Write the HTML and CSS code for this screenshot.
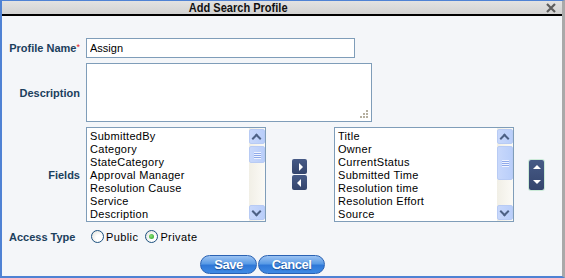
FILE: index.html
```html
<!DOCTYPE html>
<html>
<head>
    <title>Add Search Profile</title>
    <link rel="stylesheet" href="styles.css">
</head>
<body>
    <div class="dialog">
        <div class="titlebar">
            <span class="title">Add Search Profile</span>
            <svg class="close" width="10" height="10" viewBox="0 0 10 10">
                <path d="M1 1 L9 9 M9 1 L1 9" stroke="#5c5c5c" stroke-width="2.2"/>
            </svg>
        </div>
        <div class="content">
            <div class="row">
                <label class="lbl" for="profileName">Profile Name<span class="req">*</span></label>
                <input type="text" id="profileName" class="txt" value="Assign">
            </div>
            <div class="row">
                <label class="lbl" for="description">Description</label>
                <div class="area">
                    <svg class="grip" width="9" height="9" viewBox="0 0 9 9">
                        <rect x="6" y="0" width="2" height="2" fill="#b6b0a0"/>
                        <rect x="3" y="3" width="2" height="2" fill="#b6b0a0"/>
                        <rect x="6" y="3" width="2" height="2" fill="#b6b0a0"/>
                        <rect x="0" y="6" width="2" height="2" fill="#b6b0a0"/>
                        <rect x="3" y="6" width="2" height="2" fill="#b6b0a0"/>
                        <rect x="6" y="6" width="2" height="2" fill="#b6b0a0"/>
                    </svg>
                </div>
            </div>
            <div class="row">
                <span class="lbl">Fields</span>
                <div class="list">
                    <ul class="items">
                        <li>SubmittedBy</li>
                        <li>Category</li>
                        <li>StateCategory</li>
                        <li>Approval Manager</li>
                        <li>Resolution Cause</li>
                        <li>Service</li>
                        <li>Description</li>
                    </ul>
                    <div class="sbar">
                        <div class="sbtn up"></div>
                        <div class="thumb short"><span class="grips"></span></div>
                        <div class="track"></div>
                        <div class="sbtn down"></div>
                    </div>
                </div>
                <div class="move">
                    <div class="navbtn"><span class="tri right"></span></div>
                    <div class="navbtn"><span class="tri left"></span></div>
                </div>
                <div class="list">
                    <ul class="items">
                        <li>Title</li>
                        <li>Owner</li>
                        <li>CurrentStatus</li>
                        <li>Submitted Time</li>
                        <li>Resolution time</li>
                        <li>Resolution Effort</li>
                        <li>Source</li>
                    </ul>
                    <div class="sbar">
                        <div class="sbtn up"></div>
                        <div class="thumb long"><span class="grips"></span></div>
                        <div class="track"></div>
                        <div class="sbtn down"></div>
                    </div>
                </div>
                <div class="order">
                    <span class="tri up"></span>
                    <span class="tri down"></span>
                </div>
            </div>
            <div class="row access">
                <span class="lbl">Access Type</span>
                <label class="opt"><input type="radio" name="access"> Public</label>
                <label class="opt"><input type="radio" name="access" checked> Private</label>
            </div>
            <div class="actions">
                <button class="pill save">Save</button>
                <button class="pill cancel">Cancel</button>
            </div>
        </div>
    </div>
</body>
</html>
```

FILE: styles.css
```css
body {
    margin: 0;
    padding: 0;
    font-family: 'Liberation Sans', Arial, sans-serif;
    font-size: 11px;
    background-color: #f4f6f9;
}
.dialog {
    width: 560px;
    height: 275px;
    border: 1px solid #4f82d4;
    border-left-width: 2px;
    border-right: 3px solid #a9a9a9;
    border-bottom: 2px solid #4f82d4;
    background-color: #f4f6f9;
    box-shadow: 1px 0 0 #4f82d4;
    overflow: hidden;
}
.titlebar {
    height: 13px;
    border-bottom: 2px solid #000;
    background: linear-gradient(#e2e2e2, #d2d2d2);
    display: flex;
    align-items: center;
    justify-content: center;
    position: relative;
}
.title {
    font-weight: bold;
    font-size: 13px;
    color: #111;
    transform: scaleX(0.85);
    margin-left: -88px;
}
.close {
    position: absolute;
    right: 6px;
    top: 2px;
}
.content {
    padding-top: 22px;
}
.row {
    display: flex;
    align-items: center;
    margin-bottom: 5px;
}
.lbl {
    width: 78px;
    padding-right: 6px;
    text-align: right;
    font-weight: bold;
    color: #1b405d;
    font-size: 11px;
}
.req {
    color: #e02020;
    font-weight: normal;
    vertical-align: top;
    font-size: 9px;
}
.txt {
    width: 261px;
    height: 14px;
    margin: 0;
    padding: 2px 3px;
    border: 1px solid #7f9db9;
    font-family: 'Liberation Sans', Arial, sans-serif;
    font-size: 11px;
    background: #fff;
    outline: none;
}
.area {
    width: 284px;
    height: 57px;
    border: 1px solid #7f9db9;
    background: #fff;
    position: relative;
}
.grip {
    position: absolute;
    right: 2px;
    bottom: 2px;
}
.list {
    width: 178px;
    height: 93px;
    border: 1px solid #7f9db9;
    background: #fff;
    display: flex;
}
.items {
    list-style: none;
    margin: 0;
    padding: 2px 0 0 3px;
    flex: 1;
}
.items li {
    height: 13px;
    line-height: 13px;
    font-size: 11px;
    color: #000;
    letter-spacing: 0.3px;
}
.sbar {
    width: 16px;
    display: flex;
    flex-direction: column;
    background: linear-gradient(90deg, #f1efe6, #fbfaf6);
}
.sbtn, .thumb {
    margin: 1px 0;
    border: 1px solid #b8cbf4;
    border-radius: 2px;
    background: linear-gradient(90deg, #c8d8fb, #b9cefa);
    box-sizing: border-box;
    position: relative;
}
.sbtn {
    height: 15px;
}
.sbtn::after {
    content: "";
    position: absolute;
    left: 3px;
    width: 5px;
    height: 5px;
    border-left: 2px solid #4d6185;
    border-top: 2px solid #4d6185;
}
.sbtn.up::after {
    top: 5px;
    transform: rotate(45deg);
}
.sbtn.down::after {
    top: 2px;
    transform: rotate(225deg);
}
.thumb.short {
    height: 17px;
}
.thumb.long {
    height: 34px;
}
.grips {
    position: absolute;
    left: 4px;
    top: 50%;
    margin-top: -3px;
    width: 7px;
    height: 7px;
    background: repeating-linear-gradient(#f0f4fe 0 1px, #8faaea 1px 2px);
}
.track {
    flex: 1;
}
.move {
    width: 15px;
    margin: 0 27px 0 26px;
    display: flex;
    flex-direction: column;
    gap: 1px;
}
.navbtn {
    height: 15px;
    border-radius: 2px;
    background: linear-gradient(#465a86, #34456d);
    display: flex;
    align-items: center;
    justify-content: center;
}
.tri {
    width: 0;
    height: 0;
    border: 4px solid transparent;
}
.tri.right {
    border-left-color: #fff;
    border-right-width: 0;
    margin-left: 3px;
}
.tri.left {
    border-right-color: #fff;
    border-left-width: 0;
    margin-left: -1px;
}
.order {
    width: 15px;
    height: 30px;
    margin-left: 15px;
    border-radius: 2px;
    background: linear-gradient(#465a86, #34456d);
    display: flex;
    flex-direction: column;
    align-items: center;
    justify-content: space-around;
    box-shadow: 0 0 0 1px rgba(80, 200, 120, 0.25);
}
.tri.up {
    border-bottom-color: #fff;
    border-top-width: 0;
}
.tri.down {
    border-top-color: #fff;
    border-bottom-width: 0;
}
.access {
    margin-top: 8px;
    align-items: center;
}
.access .lbl {
    text-align: left;
    width: 70px;
    padding-left: 7px;
    padding-right: 12px;
}
.opt {
    display: flex;
    align-items: center;
    color: #000;
    font-size: 11px;
    letter-spacing: 0.4px;
    margin-right: 7px;
}
.opt input {
    appearance: none;
    -webkit-appearance: none;
    width: 13px;
    height: 13px;
    margin: 0 2px 0 0;
    border: 1px solid #1c5180;
    border-radius: 50%;
    background: radial-gradient(circle at 65% 65%, #fff 30%, #dcdcd4 100%);
    position: relative;
}
.opt input:checked::after {
    content: "";
    position: absolute;
    left: 3px;
    top: 3px;
    width: 5px;
    height: 5px;
    border-radius: 50%;
    background: radial-gradient(circle at 40% 40%, #8ee07a, #21a121);
}
.actions {
    display: flex;
    gap: 1px;
    padding-left: 198px;
    margin-top: 12px;
}
.pill {
    height: 19px;
    border: 1px solid #2a62b3;
    border-radius: 10px;
    background: linear-gradient(#9cc3f2 0%, #5a9be6 45%, #2f78d8 55%, #3f8ae4 100%);
    color: #fff;
    font-family: 'Liberation Sans', Arial, sans-serif;
    font-weight: bold;
    font-size: 13px;
    letter-spacing: -0.5px;
    text-shadow: 0 1px 1px #1c4f94;
    padding: 0;
    cursor: pointer;
}
.save {
    width: 57px;
}
.cancel {
    width: 67px;
}
```
